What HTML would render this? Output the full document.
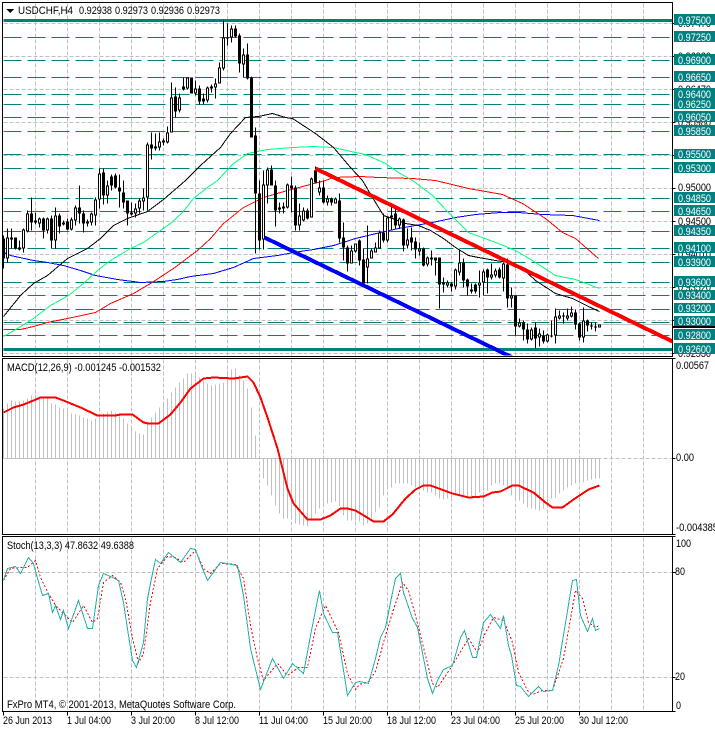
<!DOCTYPE html>
<html><head><meta charset="utf-8"><style>
html,body{margin:0;padding:0;background:#fff;width:715px;height:730px;overflow:hidden}
svg{display:block}
text{font-family:"Liberation Sans",sans-serif;font-size:11px;fill:#000;shape-rendering:auto}
.w{fill:#fff}
</style></head><body>
<svg width="715" height="730" viewBox="0 0 715 730" xmlns="http://www.w3.org/2000/svg" shape-rendering="crispEdges">
<defs><clipPath id="m"><rect x="3" y="3" width="669" height="352"/></clipPath></defs>
<rect width="715" height="730" fill="#fff"/>
<g transform="translate(.5 .5)" fill="none">
<!-- grid -->
<path stroke="#c0c0c0" stroke-dasharray="4 2" d="M35 3V355M67 3V355M99 3V355M131 3V355M163 3V355M195 3V355M227 3V355M259 3V355M291 3V355M323 3V355M355 3V355M387 3V355M419 3V355M451 3V355M483 3V355M515 3V355M547 3V355M579 3V355M611 3V355M643 3V355M35 359V533M67 359V533M99 359V533M131 359V533M163 359V533M195 359V533M227 359V533M259 359V533M291 359V533M323 359V533M355 359V533M387 359V533M419 359V533M451 359V533M483 359V533M515 359V533M547 359V533M579 359V533M611 359V533M643 359V533M35 537V711M67 537V711M99 537V711M131 537V711M163 537V711M195 537V711M227 537V711M259 537V711M291 537V711M323 537V711M355 537V711M387 537V711M419 537V711M451 537V711M483 537V711M515 537V711M547 537V711M579 537V711M611 537V711M643 537V711M3 23H672M3 56H672M3 89H672M3 122H672M3 155H672M3 188H672M3 221H672M3 254H672M3 287H672M3 320H672M3 353H672M3 458H672M3 572H672M3 677H672"/>
<path stroke="#c0c0c0" d="M3 324H672"/>
<!-- horizontal levels -->
<path stroke="#008080" stroke-dasharray="18 6" d="M3 37H670M3 60H670M3 77H670M3 94H670M3 104H670M3 117H670M3 131H670M3 154H670M3 168H670M3 198H670M3 211H670M3 231H670M3 248H670M3 262H670M3 282H670M3 295H670M3 309H670M3 322H670M3 335H670"/>
<path stroke="#008080" stroke-width="3" d="M3 20H672M3 349H672"/>
<!-- moving averages -->
<polyline stroke="#0000ff" points="3,252 10,255 33,260 47,262 63,265 80,270 95,275 117,279 140,282 163,281 177,279 190,276 213,273 233,267 253,258 277,255 293,252 313,249 333,245 355,238 380,232 398,228 432,222 455,217 475,214 500,212 518,212 542,214 572,215 599,220"/>
<polyline stroke="#ff0000" points="3,329 20,329 33,326 47,322 67,318 95,312 110,303 133,293 150,283 173,268 197,250 210,238 223,223 243,207 263,197 287,190 325,180 333,177 360,176 378,177 412,178 435,180 468,188 502,194 522,203 545,218 562,232 575,238 598,258"/>
<polyline stroke="#00ff7f" points="3,336 17,328 33,318 50,305 68,295 83,283 97,270 110,260 130,248 143,242 157,232 170,223 182,212 193,198 207,187 217,180 233,163 247,153 267,149 292,147 313,146 333,147 355,152 365,154 385,163 398,172 412,180 432,195 448,212 468,232 498,243 515,250 532,260 555,275 575,279 599,288"/>
<polyline stroke="#000" points="3,316 20,295 33,283 47,275 67,258 87,248 100,238 113,225 127,218 147,211 163,199 185,180 200,165 220,147 230,133 245,117 258,116 272,113 285,117 292,118 315,133 333,147 350,167 362,180 372,197 383,215 392,218 405,223 418,225 430,230 443,238 455,247 468,255 478,257 495,260 508,262 522,268 535,280 555,293 572,298 588,306 599,311"/>
<!-- candle wicks -->
<path stroke="#000" d="M3 235V268M7 228V262M11 228V248M15 237V249M19 240V250M23 228V252M27 210V232M31 197V230M35 212V224M39 217V227M43 217V238M47 217V233M51 215V248M55 207V248M59 213V233M63 220V225M67 218V230M71 217V230M75 205V225M79 185V223M83 210V232M87 219V226M91 212V225M95 197V225M99 168V208M103 168V204M107 180V203M111 174V190M115 173V188M119 174V207M123 180V208M127 200V225M131 202V215M135 203V217M139 198V213M143 188V210M147 142V210M151 132V159M155 133V150M159 132V150M163 138V145M167 126V143M171 82V132M175 87V117M179 93V112M183 77V90M187 77V89M191 77V93M195 80V95M199 85V104M203 93V104M207 86V102M211 84V92M215 78V98M219 62V83M223 20V70M227 23V45M231 25V42M235 25V37M239 33V72M243 48V77M247 43V79M251 76V137M255 127V253M259 180V249M263 170V249M267 167V203M271 165V185M275 180V226M279 202V213M283 202V213M287 183V208M291 176V212M295 185V230M299 203V230M303 207V221M307 208V219M311 177V217M315 166V183M319 180V195M323 180V203M327 195V205M331 197V205M335 197V203M339 193V242M343 222V260M347 245V271M351 245V263M355 243V252M359 239V265M363 248V283M367 225V283M371 248V258M375 242V252M379 230V248M383 213V242M387 216V242M391 204V230M395 207V228M399 217V228M403 218V251M407 228V248M411 227V250M415 237V258M419 242V255M423 247V266M427 256V266M431 250V265M435 257V275M439 257V308M443 277V292M447 280V287M451 282V291M455 268V289M459 250V275M463 258V287M467 278V295M471 283V293M475 283V293M479 270V297M483 269V295M487 268V293M491 263V279M495 268V277M499 267V278M503 262V291M507 258V307M511 287V307M515 295V335M519 318V327M523 320V340M527 323V343M531 327V340M535 322V348M539 328V346M543 330V343M547 333V342M551 320V337M555 308V343M559 310V319M563 312V323M567 308V320M571 306V317M575 309V329M579 322V340M583 307V342M587 319V331M591 322V329M595 322V331M599 324V327"/>
<!-- candle bodies -->
<path stroke="#000" stroke-width="3" d="M3 238V258M7 237V258M11 237V239M15 237V248M19 247V249M23 229V248M27 213V231M31 213V222M35 220V222M39 218V223M43 218V230M47 218V230M51 218V240M55 215V240M59 215V226M63 222V224M67 221V229M71 219V229M75 207V220M79 207V213M83 213V223M87 221V223M91 213V222M95 199V215M99 173V199M103 172V195M107 185V195M111 176V185M115 175V187M119 187V191M123 192V202M127 200V213M131 212V214M135 208V213M139 200V208M143 197V201M147 144V197M151 144V148M155 146V148M159 141V147M163 140V142M167 132V142M171 97V132M175 96V111M179 97V110M183 86V89M187 77V88M191 77V93M195 88V93M199 88V101M203 98V101M207 87V100M211 86V88M215 83V87M219 67V83M223 37V68M227 37V38M231 28V37M235 28V36M239 35V63M243 54V64M247 54V78M251 77V137M255 135V193M259 193V240M263 184V239M267 169V185M271 169V185M275 185V210M279 207V209M283 206V208M287 184V207M291 185V188M295 187V225M299 215V225M303 210V220M307 210V218M311 178V217M315 170V182M319 187V192M323 187V202M327 198V202M331 198V202M335 198V203M339 200V238M343 237V247M347 247V263M351 250V263M355 243V251M359 240V260M363 259V283M367 258V267M371 250V258M375 247V252M379 232V248M383 232V240M387 217V240M391 215V217M395 213V225M399 218V225M403 219V245M407 239V245M411 237V242M415 241V249M419 248V251M423 248V265M427 257V264M431 257V259M435 257V260M439 257V284M443 282V284M447 282V285M451 283V286M455 269V286M459 262V272M463 262V280M467 279V286M471 289V291M475 284V291M479 282V285M483 271V282M487 269V277M491 274V277M495 270V275M499 269V277M503 263V278M507 264V298M511 295V298M515 295V326M519 322V326M523 322V329M527 329V339M531 329V339M535 327V338M539 333V337M543 335V341M547 334V341M551 335V336M555 316V335M559 315V318M563 315V316M567 315V318M571 312V316M575 312V324M579 323V337M583 320V337M587 320V325M591 325V326M595 326V327M599 324V327"/>
<path stroke="#fff" d="M7 238V257M23 230V247M27 214V230M39 219V222M47 219V229M55 216V239M71 220V228M75 208V219M91 214V221M95 200V214M99 174V198M107 186V194M135 209V212M139 201V207M143 198V200M147 145V196M159 142V146M167 133V141M171 98V131M179 98V109M187 78V87M195 89V92M207 88V99M215 84V86M219 68V82M223 38V67M231 29V36M243 55V63M263 185V238M267 170V184M287 185V206M299 216V224M303 211V219M311 179V216M319 188V191M327 199V201M335 199V202M351 251V262M355 244V250M367 259V266M371 251V257M375 248V251M379 233V247M387 218V239M399 219V224M407 240V244M419 249V250M427 258V263M447 283V284M455 270V285M459 263V271M479 283V284M483 272V281M491 275V276M495 271V274M503 264V277M511 296V297M519 323V325M531 330V338M539 334V336M547 335V340M555 317V334M559 316V317M567 316V317M571 313V315M583 321V336M599 325V326"/>
<!-- trend lines -->
<g clip-path="url(#m)">
<path stroke="#0000ff" stroke-width="4" d="M264 237L512 357"/>
<path stroke="#ff0000" stroke-width="4" d="M315 168L672 341"/>
</g>
<!-- MACD -->
<path stroke="#c0c0c0" d="M3 458H599M3 408V458M7 403V458M11 400V458M15 401V458M19 401V458M23 400V458M27 398V458M31 395V458M35 394V458M39 396V458M43 397V458M47 398V458M51 403V458M55 404V458M59 407V458M63 408V458M67 410V458M71 413V458M75 414V458M79 415V458M83 417V458M87 418V458M91 420V458M95 418V458M99 415V458M103 413V458M107 412V458M111 410V458M115 412V458M119 415V458M123 418V458M127 423V458M131 428V458M135 431V458M139 433V458M143 434V458M147 422V458M151 417V458M155 412V458M159 407V458M163 405V458M167 398V458M171 392V458M175 387V458M179 382V458M183 378V458M187 373V458M191 373V458M195 373V458M199 377V458M203 380V458M207 383V458M211 385V458M215 384V458M219 383V458M223 382V458M227 370V458M231 369V458M235 368V458M239 375V458M243 380V458M247 388V458M251 407V458M255 435V458M263 458V478M267 458V485M271 458V495M275 458V505M279 458V513M283 458V518M287 458V518M291 458V518M295 458V523M299 458V524M303 458V525M307 458V526M311 458V520M315 458V513M319 458V508M323 458V505M327 458V503M331 458V502M335 458V501M339 458V505M343 458V515M347 458V520M351 458V520M355 458V520M359 458V521M363 458V525M367 458V523M371 458V518M375 458V512M379 458V507M383 458V495M387 458V488M391 458V487M395 458V483M399 458V483M403 458V483M407 458V483M411 458V485M415 458V487M419 458V488M423 458V490M427 458V492M431 458V492M435 458V495M439 458V498M443 458V499M447 458V498M451 458V497M455 458V495M459 458V495M463 458V495M467 458V497M471 458V497M475 458V497M479 458V492M483 458V490M487 458V490M491 458V485M495 458V483M499 458V483M503 458V485M507 458V487M511 458V495M515 458V498M519 458V500M523 458V503M527 458V507M531 458V508M535 458V509M539 458V510M543 458V508M547 458V503M551 458V498M555 458V497M559 458V493M563 458V490M567 458V487M571 458V485M575 458V483M579 458V483M583 458V482M587 458V480M591 458V479M595 458V478M599 458V478"/>
<polyline stroke="#ff0000" stroke-width="2" points="3,412 7,410 13,407 23,404 33,400 40,397 55,397 63,400 80,407 97,415 115,415 120,414 132,414 143,422 148,423 158,423 170,414 180,402 190,388 203,378 213,377 233,378 247,376 253,382 260,397 267,417 277,448 287,488 293,503 307,519 320,519 330,515 340,508 347,508 355,510 365,516 373,521 383,521 392,514 405,498 415,489 423,485 430,485 452,493 468,497 483,496 492,492 500,491 512,485 518,485 533,492 545,502 552,507 562,507 573,499 588,489 599,485"/>
<!-- Stochastic -->
<polyline stroke="#ff0000" stroke-dasharray="2 2" points="3,580 10,568 20,567 27,567 35,560 40,577 48,593 55,605 65,615 72,622 83,605 92,622 97,618 103,582 112,575 120,582 125,598 132,638 138,662 143,653 150,602 157,568 167,556 175,557 183,562 195,550 203,568 210,573 220,563 235,564 243,578 250,625 257,658 263,680 277,663 287,675 298,667 307,667 315,628 325,605 338,632 347,673 355,689 359,684 368,681 375,671 383,642 392,612 402,582 408,590 415,615 423,647 432,683 437,687 450,668 462,648 468,638 477,652 485,632 493,617 503,620 512,642 518,672 527,690 532,694 542,690 552,690 563,658 575,590 582,598 588,622 595,627 599,625"/>
<polyline stroke="#20b2aa" points="3,580 7,568 15,566 20,573 28,557 33,563 37,578 42,595 48,593 52,612 55,605 60,619 63,610 68,628 78,600 87,628 92,628 98,585 103,573 112,577 118,580 123,602 128,635 132,660 136,667 143,642 147,598 152,573 155,559 160,563 168,552 180,562 190,548 195,549 200,563 207,580 220,562 237,565 243,595 250,648 260,689 272,658 283,678 292,663 303,673 310,635 319,590 323,613 332,632 337,632 347,695 355,682 359,681 368,683 375,658 380,637 385,627 392,592 395,578 400,573 403,592 412,618 417,627 427,678 432,693 437,680 443,669 452,665 460,637 464,630 472,657 476,657 483,622 490,614 500,628 503,615 508,645 511,655 516,685 520,686 528,696 538,686 543,691 552,690 558,665 572,580 576,579 580,615 587,631 592,618 595,630 599,628"/>
<!-- frames and ticks -->
<path stroke="#000" d="M2 2H672V356H2ZM2 358H672V534H2ZM2 536H672V711H2Z"/>
<path stroke="#000" d="M672 23H675M672 56H675M672 89H675M672 122H675M672 155H675M672 188H675M672 221H675M672 254H675M672 287H675M672 320H675M672 353H675M672 358H675M672 458H675M672 534H675M672 536H675M672 572H675M672 677H675M672 711H675M3 711V715M67 711V715M131 711V715M195 711V715M259 711V715M323 711V715M387 711V715M451 711V715M515 711V715M579 711V715"/>
</g>
<!-- symbol title -->
<polygon points="6,9 14,9 10,13" fill="#000"/>
<text x="18" y="14" textLength="55" lengthAdjust="spacingAndGlyphs">USDCHF,H4</text>
<text x="79" y="14" textLength="33" lengthAdjust="spacingAndGlyphs">0.92938</text>
<text x="115" y="14" textLength="33" lengthAdjust="spacingAndGlyphs">0.92973</text>
<text x="151" y="14" textLength="33" lengthAdjust="spacingAndGlyphs">0.92936</text>
<text x="187" y="14" textLength="33" lengthAdjust="spacingAndGlyphs">0.92973</text>
<text x="7" y="371" textLength="154" lengthAdjust="spacingAndGlyphs">MACD(12,26,9) -0.001245 -0.001532</text>
<text x="7" y="549" textLength="127" lengthAdjust="spacingAndGlyphs">Stoch(13,3,3) 47.8632 49.6388</text>
<text x="7" y="708" textLength="229" lengthAdjust="spacingAndGlyphs">FxPro MT4, © 2001-2013, MetaQuotes Software Corp.</text>
<!-- time axis -->
<text x="3" y="724" textLength="49" lengthAdjust="spacingAndGlyphs">26 Jun 2013</text>
<text x="67" y="724" textLength="44" lengthAdjust="spacingAndGlyphs">1 Jul 04:00</text>
<text x="131" y="724" textLength="44" lengthAdjust="spacingAndGlyphs">3 Jul 20:00</text>
<text x="195" y="724" textLength="44" lengthAdjust="spacingAndGlyphs">8 Jul 12:00</text>
<text x="259" y="724" textLength="49" lengthAdjust="spacingAndGlyphs">11 Jul 04:00</text>
<text x="323" y="724" textLength="49" lengthAdjust="spacingAndGlyphs">15 Jul 20:00</text>
<text x="387" y="724" textLength="49" lengthAdjust="spacingAndGlyphs">18 Jul 12:00</text>
<text x="451" y="724" textLength="49" lengthAdjust="spacingAndGlyphs">23 Jul 04:00</text>
<text x="515" y="724" textLength="49" lengthAdjust="spacingAndGlyphs">25 Jul 20:00</text>
<text x="579" y="724" textLength="49" lengthAdjust="spacingAndGlyphs">30 Jul 12:00</text>
<!-- price axis (black, partly hidden) -->
<text x="678" y="27" textLength="33" lengthAdjust="spacingAndGlyphs">0.97470</text>
<text x="678" y="60" textLength="33" lengthAdjust="spacingAndGlyphs">0.96980</text>
<text x="678" y="93" textLength="33" lengthAdjust="spacingAndGlyphs">0.96470</text>
<text x="678" y="126" textLength="33" lengthAdjust="spacingAndGlyphs">0.95980</text>
<text x="678" y="191" textLength="33" lengthAdjust="spacingAndGlyphs">0.95000</text>
<text x="678" y="225" textLength="33" lengthAdjust="spacingAndGlyphs">0.94500</text>
<text x="678" y="258" textLength="33" lengthAdjust="spacingAndGlyphs">0.94010</text>
<text x="678" y="291" textLength="33" lengthAdjust="spacingAndGlyphs">0.93520</text>
<text x="678" y="357" textLength="33" lengthAdjust="spacingAndGlyphs">0.92530</text>
<rect x="673" y="326" width="42" height="2" fill="#000"/>
<!-- level labels -->
<g fill="#008080">
<rect x="674" y="14" width="41" height="11"/><rect x="674" y="31" width="41" height="11"/><rect x="674" y="54" width="41" height="11"/><rect x="674" y="71" width="41" height="11"/><rect x="674" y="88" width="41" height="11"/><rect x="674" y="99" width="41" height="10"/><rect x="674" y="111" width="41" height="11"/><rect x="674" y="125" width="41" height="11"/><rect x="674" y="149" width="41" height="10"/><rect x="674" y="162" width="41" height="11"/><rect x="674" y="192" width="41" height="11"/><rect x="674" y="205" width="41" height="11"/><rect x="674" y="225" width="41" height="11"/><rect x="674" y="242" width="41" height="11"/><rect x="674" y="256" width="41" height="11"/><rect x="674" y="276" width="41" height="11"/><rect x="674" y="290" width="41" height="10"/><rect x="674" y="303" width="41" height="10"/><rect x="674" y="316" width="41" height="10"/><rect x="674" y="329" width="41" height="11"/><rect x="674" y="343" width="41" height="11"/>
</g>
<g>
<text class="w" x="678" y="24" textLength="33" lengthAdjust="spacingAndGlyphs">0.97500</text>
<text class="w" x="678" y="41" textLength="33" lengthAdjust="spacingAndGlyphs">0.97250</text>
<text class="w" x="678" y="64" textLength="33" lengthAdjust="spacingAndGlyphs">0.96900</text>
<text class="w" x="678" y="81" textLength="33" lengthAdjust="spacingAndGlyphs">0.96650</text>
<text class="w" x="678" y="98" textLength="33" lengthAdjust="spacingAndGlyphs">0.96400</text>
<text class="w" x="678" y="108" textLength="33" lengthAdjust="spacingAndGlyphs">0.96250</text>
<text class="w" x="678" y="121" textLength="33" lengthAdjust="spacingAndGlyphs">0.96050</text>
<text class="w" x="678" y="135" textLength="33" lengthAdjust="spacingAndGlyphs">0.95850</text>
<text class="w" x="678" y="158" textLength="33" lengthAdjust="spacingAndGlyphs">0.95500</text>
<text class="w" x="678" y="172" textLength="33" lengthAdjust="spacingAndGlyphs">0.95300</text>
<text class="w" x="678" y="202" textLength="33" lengthAdjust="spacingAndGlyphs">0.94850</text>
<text class="w" x="678" y="215" textLength="33" lengthAdjust="spacingAndGlyphs">0.94650</text>
<text class="w" x="678" y="235" textLength="33" lengthAdjust="spacingAndGlyphs">0.94350</text>
<text class="w" x="678" y="252" textLength="33" lengthAdjust="spacingAndGlyphs">0.94100</text>
<text class="w" x="678" y="266" textLength="33" lengthAdjust="spacingAndGlyphs">0.93900</text>
<text class="w" x="678" y="286" textLength="33" lengthAdjust="spacingAndGlyphs">0.93600</text>
<text class="w" x="678" y="299" textLength="33" lengthAdjust="spacingAndGlyphs">0.93400</text>
<text class="w" x="678" y="312" textLength="33" lengthAdjust="spacingAndGlyphs">0.93200</text>
<text class="w" x="678" y="325" textLength="33" lengthAdjust="spacingAndGlyphs">0.93000</text>
<text class="w" x="678" y="339" textLength="33" lengthAdjust="spacingAndGlyphs">0.92800</text>
<text class="w" x="678" y="353" textLength="33" lengthAdjust="spacingAndGlyphs">0.92600</text>
</g>
<!-- indicator axis -->
<text x="676" y="369" textLength="33" lengthAdjust="spacingAndGlyphs">0.00567</text>
<text x="676" y="461" textLength="18" lengthAdjust="spacingAndGlyphs">0.00</text>
<text x="676" y="531" textLength="42" lengthAdjust="spacingAndGlyphs">-0.004385</text>
<text x="676" y="547" textLength="15" lengthAdjust="spacingAndGlyphs">100</text>
<text x="675" y="575" textLength="10" lengthAdjust="spacingAndGlyphs">80</text>
<text x="675" y="680" textLength="10" lengthAdjust="spacingAndGlyphs">20</text>
<text x="676" y="709" textLength="5" lengthAdjust="spacingAndGlyphs">0</text>
</svg>
</body></html>
